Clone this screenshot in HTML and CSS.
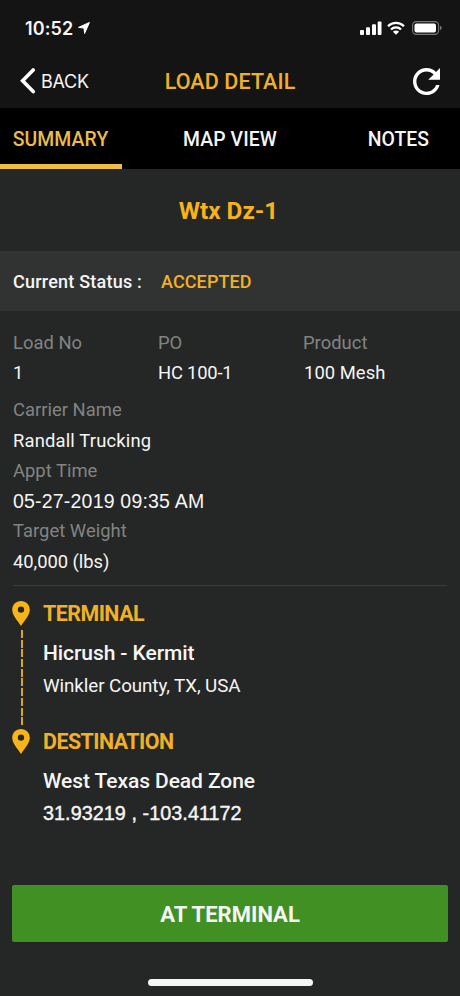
FILE: index.html
```html
<!DOCTYPE html>
<html lang="en">
<head>
<meta charset="utf-8">
<title>Load Detail</title>
<link rel="stylesheet" href="styles.css">
</head>
<body>
<div class="app">
  <header class="top">
    <div class="statusbar">
      <span class="clock">10:52</span>
      <svg class="locate" viewBox="0 0 12 12"><path d="M0.5 5.4 L11.4 0.5 L6.6 11.5 L6 6 Z"/></svg>
      <svg class="signal" viewBox="0 0 22 14"><rect x="0" y="9" width="4" height="5" rx="1"/><rect x="6" y="6.3" width="4" height="7.7" rx="1"/><rect x="12" y="3.3" width="4" height="10.7" rx="1"/><rect x="17.7" y="0.5" width="3.8" height="13.5" rx="1"/></svg>
      <svg class="wifi" viewBox="0 0 18 14"><path class="arc" d="M1 5.2 A11.4 11.4 0 0 1 17 5.2 M4 8.5 A7 7 0 0 1 14 8.5"/><path d="M9 13.8 L5.9 10.7 A4.4 4.4 0 0 1 12.1 10.7 Z"/></svg>
      <svg class="battery" viewBox="0 0 30 14"><rect class="shell" x="0.6" y="0.6" width="26" height="12.8" rx="3.6"/><rect x="2.5" y="2.4" width="21.5" height="9.2" rx="2"/><path class="tip" d="M28 4.8 Q29.7 5.4 29.7 7 Q29.7 8.6 28 9.2 Z"/></svg>
    </div>
    <div class="navbar">
      <div class="back">
        <svg class="chevron" viewBox="0 0 16 26"><path d="M13.2 2 L2.6 12.8 L13.2 23.6"/></svg>
        <span class="back-text">BACK</span>
      </div>
      <h1>LOAD DETAIL</h1>
      <svg class="refresh" viewBox="4 4 16 16"><path d="M17.65 6.35C16.2 4.9 14.21 4 12 4c-4.42 0-7.99 3.58-7.99 8s3.57 8 7.99 8c3.73 0 6.84-2.55 7.73-6h-2.08c-.82 2.33-3.04 4-5.65 4-3.31 0-6-2.69-6-6s2.69-6 6-6c1.66 0 3.14.69 4.22 1.78L13 11h7V4z"/></svg>
    </div>
  </header>
  <nav class="tabs">
    <div class="tab active">SUMMARY</div>
    <div class="tab">MAP VIEW</div>
    <div class="tab last">NOTES</div>
  </nav>
  <h2>Wtx Dz-1</h2>
  <section class="status"><span class="t-status">Current Status :</span><span class="t-accepted">ACCEPTED</span></section>
  <main>
    <div class="trio">
      <div class="field"><span class="label">Load No</span><span class="value">1</span></div>
      <div class="field"><span class="label">PO</span><span class="value t-hc">HC 100-1</span></div>
      <div class="field"><span class="label">Product</span><span class="value t-mesh">100 Mesh</span></div>
    </div>
    <div class="field"><span class="label">Carrier Name</span><span class="value low">Randall Trucking</span></div>
    <div class="field"><span class="label">Appt Time</span><span class="value date">05-27-2019 09:35 AM</span></div>
    <div class="field"><span class="label">Target Weight</span><span class="value low weight">40,000 (lbs)</span></div>
    <div class="route">
      <div class="stop first">
        <div class="rail"><svg class="pin" viewBox="0 0 18 25"><path fill-rule="evenodd" d="M9 0 C4 0 0.2 3.8 0.2 8.8 C0.2 14.5 5.6 19.6 9 25 C12.4 19.6 17.8 14.5 17.8 8.8 C17.8 3.8 14 0 9 0 Z M9 5.4 A3.2 3.2 0 1 1 9 11.8 A3.2 3.2 0 1 1 9 5.4 Z"/></svg><div class="dashes"></div></div>
        <div class="stop-body">
          <div class="kind">TERMINAL</div>
          <div class="place">Hicrush - Kermit</div>
          <div class="where">Winkler County, TX, USA</div>
        </div>
      </div>
      <div class="stop">
        <div class="rail"><svg class="pin" viewBox="0 0 18 25"><path fill-rule="evenodd" d="M9 0 C4 0 0.2 3.8 0.2 8.8 C0.2 14.5 5.6 19.6 9 25 C12.4 19.6 17.8 14.5 17.8 8.8 C17.8 3.8 14 0 9 0 Z M9 5.4 A3.2 3.2 0 1 1 9 11.8 A3.2 3.2 0 1 1 9 5.4 Z"/></svg></div>
        <div class="stop-body">
          <div class="kind">DESTINATION</div>
          <div class="place">West Texas Dead Zone</div>
          <div class="coords">31.93219 , -103.41172</div>
        </div>
      </div>
    </div>
  </main>
  <footer>
    <button>AT TERMINAL</button>
    <div class="home"></div>
  </footer>
</div>
</body>
</html>
```
FILE: styles.css
```css
* { box-sizing: border-box; margin: 0; padding: 0; }
body { background: #252726; color: #f5f5f5; font-family: Roboto, sans-serif; font-size: 18px; }
svg { display: block; fill: #fff; flex: none; }
span { white-space: nowrap; }
.app { width: 460px; height: 996px; display: flex; flex-direction: column; overflow: hidden; }
.top { height: 108px; background: #141414; }
.statusbar { height: 56px; display: flex; align-items: center; padding: 0 18px 0 25px; }
.clock { font: 600 18px/22px Inter, sans-serif; letter-spacing: 0.1px; padding-top: 1px; }
.locate { width: 12px; height: 12px; margin-left: 5px; margin-right: auto; }
.locate path { stroke: #fff; stroke-width: 1; stroke-linejoin: round; }
.signal { width: 22px; height: 14px; margin-right: 5px; }
.wifi { width: 18px; height: 14px; margin-right: 7px; }
.arc { fill: none; stroke: #fff; stroke-width: 2.3; }
.battery { width: 30px; height: 14px; }
.shell { fill: none; stroke: #777; stroke-width: 1.1; }
.tip { fill: #777; }
.navbar { height: 50px; display: grid; grid-template-columns: 126px 1fr 126px; align-items: center; }
.back { display: flex; align-items: center; padding-left: 20px; }
.chevron { width: 16px; height: 26px; margin-right: 5px; }
.chevron path { fill: none; stroke: #fff; stroke-width: 3.6; stroke-linecap: round; }
.back-text { font: 400 18px/24px Inter, sans-serif; letter-spacing: -0.25px; padding-top: 2px; }
h1 { font-size: 21.5px; line-height: 26px; padding-top: 1px; font-weight: 500; color: #f0b127; text-align: center; letter-spacing: 0.1px; }
.refresh { width: 27px; height: 27px; justify-self: end; margin-right: 20px; }
.tabs { height: 61px; background: #000; display: grid; grid-template-columns: 122px 1fr 122px; font-size: 19.4px; font-weight: 500; }
.tab { display: flex; align-items: center; justify-content: center; height: 61px; padding-top: 7px; border-bottom: 5px solid transparent; letter-spacing: 0.1px; }
.active { padding-right: 1px; color: #eabc48; border-bottom-color: #efbd43; }
.last { justify-content: flex-end; padding-right: 31px; letter-spacing: 0; }
h2 { height: 82px; line-height: 84px; padding-right: 3px; text-align: center; font-size: 24.3px; font-weight: 700; color: #f8b21c; }
.status { height: 60px; background: #313332; display: flex; align-items: center; padding: 0 12px 0 13px; font-weight: 500; }
.t-status { width: 148px; letter-spacing: 0.22px; }
.t-accepted { color: #f0b127; letter-spacing: 0.1px; }
main { padding: 16px 13px 0; }
.trio { display: grid; grid-template-columns: 145px 145px 1fr; margin-bottom: 6.4px; }
.field { display: flex; flex-direction: column; }
.label { line-height: 31px; font-size: 18.4px; color: #828483; letter-spacing: 0.02px; }
.value { line-height: 30px; font-size: 18.4px; letter-spacing: 0.17px; }
.low { line-height: 28px; padding-top: 2px; }
.t-hc { letter-spacing: -0.2px; }
.t-mesh { padding-left: 1px; letter-spacing: 0.05px; }
.date { font-family: "Liberation Sans", sans-serif; font-size: 19.5px; line-height: 27px; padding-top: 2px; letter-spacing: 0.2px; }
.weight { letter-spacing: -0.05px; }
.route { margin-top: 9px; border-top: 1px solid #393b3a; padding-top: 11.6px; }
.stop { display: flex; }
.first { height: 128px; }
.rail { width: 30px; display: flex; flex-direction: column; padding-top: 3.5px; }
.pin { width: 18px; height: 25px; margin-left: -0.6px; fill: #f8b519; }
.dashes { width: 1.6px; flex: 1; margin: 4px 0 0 8px; background: repeating-linear-gradient(#dca520 0 8px, transparent 8px 9.7px); }
.kind { line-height: 31px; font-size: 21.4px; font-weight: 700; color: #f0b127; letter-spacing: -0.52px; }
.place { padding-top: 3px; line-height: 43px; font-size: 21px; font-weight: 500; white-space: nowrap; letter-spacing: -0.08px; }
.where { line-height: 22px; font-size: 18.8px; letter-spacing: -0.08px; }
.coords { font: 400 19.8px/20px "Liberation Sans", sans-serif; -webkit-text-stroke: 0.4px; white-space: nowrap; letter-spacing: 0.05px; }
footer { margin-top: auto; padding: 0 12px 10px; height: 111px; display: flex; flex-direction: column; align-items: center; justify-content: space-between; }
button { width: 436px; height: 57px; border: 0; border-radius: 2px; background: #419024; color: #f5f5f5; font: 700 22px/26px Roboto, sans-serif; padding-top: 2px; }
.home { width: 165px; height: 7px; border-radius: 4px; background: #f5f5f5; }
```
